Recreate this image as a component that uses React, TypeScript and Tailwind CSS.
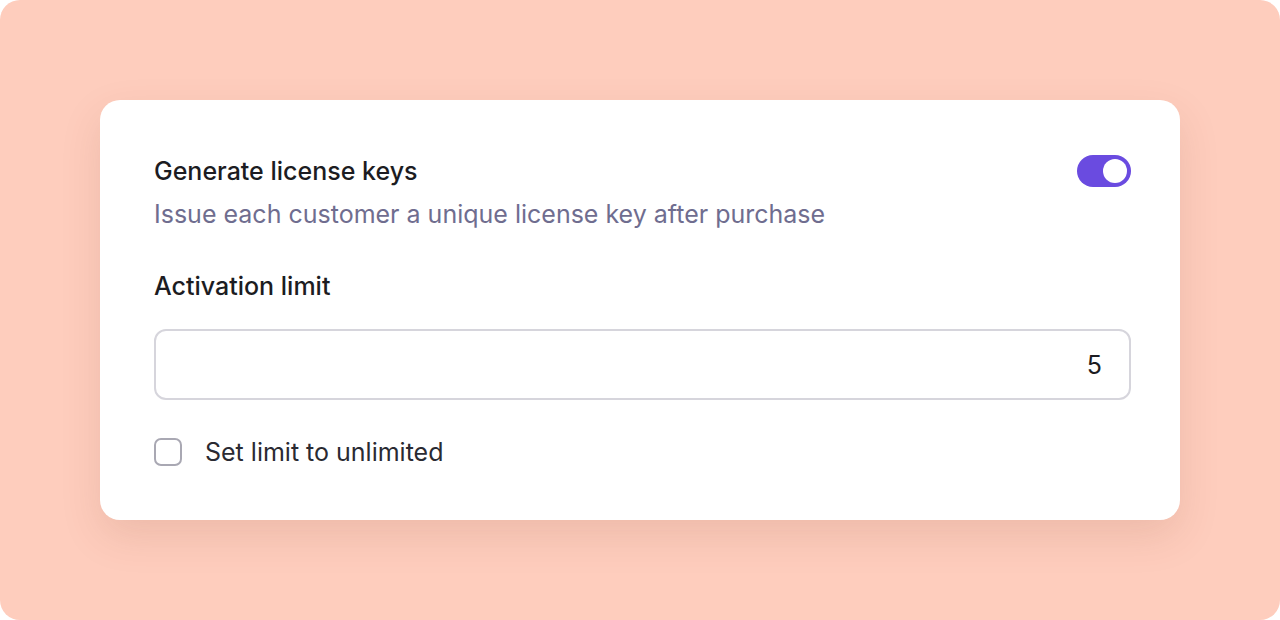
import React, { useState } from 'react';

const App = () => {
    const [enabled, setEnabled] = useState(true);
    const [unlimited, setUnlimited] = useState(false);

    return (
        <div className="w-[1280px] h-[620px] bg-white" style={{ fontFamily: 'Inter, "Noto Sans", sans-serif' }}>
            <div className="w-full h-full rounded-[20px] bg-[#fecdbd] px-[100px] pt-[100px]">
                <div className="bg-white rounded-[20px] shadow-[0_16px_40px_rgba(120,60,40,0.13)] pl-[54px] pr-[49px] pt-[52px] pb-[53px]">
                    {/* Toggle row */}
                    <div className="flex items-start justify-between">
                        <div>
                            <h2 className="text-[25px] leading-[38px] font-medium text-[#1c1c22]">Generate license keys</h2>
                            <p className="text-[25px] leading-[48px] text-[#6f6d8f]">Issue each customer a unique license key after purchase</p>
                        </div>
                        <button
                            onClick={() => setEnabled(!enabled)}
                            className={`mt-[3px] w-[54px] h-[32px] rounded-full flex items-center px-[4px] ${enabled ? 'bg-[#6a4be0] justify-end' : 'bg-gray-300 justify-start'}`}
                        >
                            <span className="w-[24px] h-[24px] rounded-full bg-white block" />
                        </button>
                    </div>

                    {/* Activation limit */}
                    <label className="block mt-[29px] text-[25px] leading-[38px] font-medium text-[#1c1c22]">Activation limit</label>
                    <input
                        type="text"
                        defaultValue="5"
                        className="mt-[24px] w-full h-[71px] rounded-[12px] border-2 border-[#d6d5dc] pl-[24px] pr-[27px] text-right text-[25px] text-[#1c1c22] outline-none"
                    />

                    <label className="mt-[37px] flex items-center gap-[23px] leading-[30px] cursor-pointer">
                        <span
                            onClick={() => setUnlimited(!unlimited)}
                            className={`w-[28px] h-[28px] rounded-[7px] border-2 ${unlimited ? 'bg-[#6a4be0] border-[#6a4be0]' : 'border-[#a9a8b3] bg-white'}`}
                        />
                        <span className="text-[25px] text-[#2a2a32]">Set limit to unlimited</span>
                    </label>
                </div>
            </div>
        </div>
    );
};

export default App;
